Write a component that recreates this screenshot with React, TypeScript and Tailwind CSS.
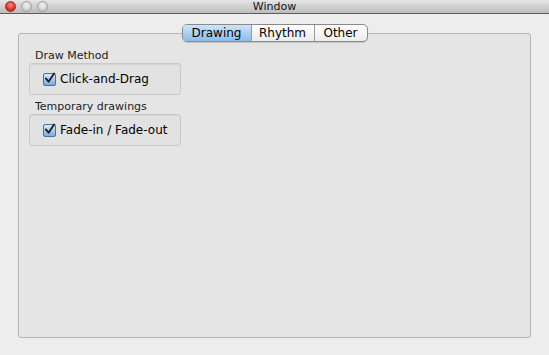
import React from "react";

const font = { fontFamily: '"DejaVu Sans", "Liberation Sans", sans-serif' };

const Light = ({ red }: { red?: boolean }) => (
  <span
    className={
      red
        ? "h-[11px] w-[11px] rounded-full border border-[#9a2a2a] bg-[radial-gradient(circle_at_50%_35%,#ff8a80,#d7261f_70%)]"
        : "h-[11px] w-[11px] rounded-full border border-[#9c9c9c] bg-[radial-gradient(circle_at_50%_35%,#f4f4f4,#c9c9c9_75%)]"
    }
  />
);

const Check = () => (
  <span className="flex h-[13px] w-[13px] items-center justify-center rounded-[2px] border border-[#4a6f9c] bg-gradient-to-b from-[#d9ecfb] to-[#74acdf]">
    <svg width="12" height="12" viewBox="0 0 12 12" className="-mt-[2px]">
      <path d="M2 6.5 L5 10 L11 1" fill="none" stroke="#1c1c1c" strokeWidth="2" strokeLinecap="round" strokeLinejoin="round" />
    </svg>
  </span>
);

const Group = ({ title, label }: { title: string; label: string }) => (
  <div>
    <div className="mb-[1px] pl-[6px] text-[11px] leading-[12px] text-[#222]">{title}</div>
    <div className="flex h-[32px] w-[152px] items-center gap-[4px] rounded-[3px] border border-[#c9c9c9] bg-[#e2e2e2] pl-[13px] shadow-[inset_0_1px_0_#d4d4d4]">
      <Check />
      <span className="text-[12px] text-black">{label}</span>
    </div>
  </div>
);

const tabs = ["Drawing", "Rhythm", "Other"];

export default function App() {
  return (
    <div className="flex h-[355px] w-[549px] flex-col bg-[#ededed]" style={font}>
      <div className="relative flex h-[14px] items-center border-b border-[#5d5d5d] bg-gradient-to-b from-[#e6e6e6] to-[#bcbcbc]">
        <div className="absolute left-[5px] top-[1px] flex gap-[5px]">
          <Light red />
          <Light />
          <Light />
        </div>
        <div className="w-full text-center text-[11px] leading-[13px] text-[#111]">Window</div>
      </div>

      <div className="flex flex-1 flex-col px-[18px] pb-[17px] pt-[10px]">
        <div className="relative z-10 flex self-center overflow-hidden rounded-[5px] border border-[#8a8a8a] bg-gradient-to-b from-[#ffffff] to-[#ececec] shadow-[0_1px_1px_rgba(0,0,0,0.15)]">
          {tabs.map((t, i) => (
            <div
              key={t}
              className={
                i === 0
                  ? "flex h-[16px] w-[68px] items-center justify-center bg-gradient-to-b from-[#cde4f8] to-[#8cbce9] text-[12px] text-black"
                  : i === 1
                    ? "flex h-[16px] w-[63px] items-center justify-center border-l border-[#9a9a9a] text-[12px] text-black"
                    : "flex h-[16px] w-[53px] items-center justify-center border-l border-[#9a9a9a] text-[12px] text-black"
              }
            >
              {t}
            </div>
          ))}
        </div>
        <div className="-mt-[9px] flex flex-1 flex-col gap-[6px] rounded-[3px] border border-[#b3b3b3] bg-[#e5e5e5] px-[10px] pt-[16px]">
          <Group title="Draw Method" label="Click-and-Drag" />
          <Group title="Temporary drawings" label="Fade-in / Fade-out" />
        </div>
      </div>
    </div>
  );
}
